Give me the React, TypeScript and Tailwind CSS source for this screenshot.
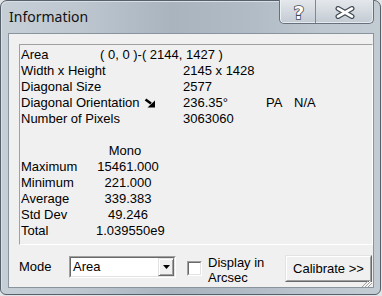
import React from "react";

function Arrow() {
  return (
    <svg width="12" height="10" viewBox="0 0 12 10" className="ml-[4px]">
      <line x1="1.5" y1="1.5" x2="7" y2="5.5" stroke="#000" strokeWidth="2.6" />
      <polygon points="11,9.5 3.5,9.5 11,2.5" fill="#000" />
    </svg>
  );
}

function Row({ label, w, children }: { label: React.ReactNode; w: string; children?: React.ReactNode }) {
  return (
    <div className="flex h-[16px] items-center whitespace-nowrap">
      <div className={`${w} flex items-center shrink-0`}>{label}</div>
      {children}
    </div>
  );
}

function StatRow({ label, value }: { label: string; value: string }) {
  return (
    <div className="flex h-[16px] items-center whitespace-nowrap">
      <div className="w-[75px] shrink-0">{label}</div>
      <div className="w-[64px] text-center">{value}</div>
    </div>
  );
}

export default function App() {
  return (
    <div className="w-[382px] h-[296px] bg-[#e2e5e8] overflow-hidden font-['Liberation_Sans',Arial,sans-serif] text-black">
      <div className="w-[381px] h-[295px] rounded-t-[7px] rounded-b-[6px] border border-[#56616c] bg-[linear-gradient(90deg,#c6ced6_0%,#bec7d0_20%,#a9b4bf_45%,#b1bbc5_65%,#bec7d0_85%,#c3cbd3_100%)] flex flex-col pl-[7px] pr-[6px] pb-[6px] shadow-[inset_1px_1px_0_#d8dee4]">
        {/* title bar */}
        <div className="h-[32px] flex items-start shrink-0">
          <div className="mt-[6px] ml-[1px] h-[20px] leading-[20px] text-[14px] font-['Noto_Sans',sans-serif] text-[#111]">
            Information
          </div>
          <div className="ml-auto -mt-[1px] flex h-[24px] w-[95px] rounded-b-[5px] border border-t-0 border-[#66717d] overflow-hidden bg-[linear-gradient(180deg,#e4e8ec_0%,#d3d9df_50%,#c3cad2_100%)] shadow-[inset_1px_0_0_#eef1f4,inset_-1px_-1px_0_#e6eaee]">
            <div className="w-[35px] h-full flex items-center justify-center">
              <svg width="18" height="22" viewBox="0 0 18 22" className="ml-[2px] overflow-visible">
                <text
                  x="9"
                  y="18"
                  textAnchor="middle"
                  fontFamily="DejaVu Sans, sans-serif"
                  fontWeight="bold"
                  fontSize="18"
                  fill="#ffffff"
                  stroke="#3f4852"
                  strokeWidth="1.6"
                  paintOrder="stroke"
                >
                  ?
                </text>
              </svg>
            </div>
            <div className="flex-1 h-full border-l border-[#7d8894] flex items-center justify-center">
              <svg width="20" height="13" viewBox="0 0 20 13" className="ml-[1px] mt-[1px]">
                <g strokeLinecap="round">
                  <line x1="3" y1="2.5" x2="17" y2="10.5" stroke="#3f4852" strokeWidth="5" />
                  <line x1="17" y1="2.5" x2="3" y2="10.5" stroke="#3f4852" strokeWidth="5" />
                  <line x1="3" y1="2.5" x2="17" y2="10.5" stroke="#ffffff" strokeWidth="2.6" />
                  <line x1="17" y1="2.5" x2="3" y2="10.5" stroke="#ffffff" strokeWidth="2.6" />
                </g>
              </svg>
            </div>
          </div>
        </div>

        {/* client area */}
        <div className="relative h-[255px] w-[366px] border border-[#8a949e] bg-[#f0f0f0] flex flex-col text-[13px] leading-[16px]">
          <div className="ml-[10px] mt-[10px] w-[354px] h-[201px] border border-l-[#a0a0a0] border-t-[#a0a0a0] border-r-white border-b-white pl-[1px] pt-[2px]">
            <Row label="Area" w="w-[79px]">
              <span>( 0, 0 )-( 2144, 1427 )</span>
            </Row>
            <Row label="Width x Height" w="w-[162px]">
              <span>2145 x 1428</span>
            </Row>
            <Row label="Diagonal Size" w="w-[162px]">
              <span>2577</span>
            </Row>
            <Row
              label={
                <>
                  <span>Diagonal Orientation</span>
                  <Arrow />
                </>
              }
              w="w-[162px]"
            >
              <span className="w-[83px] shrink-0">236.35°</span>
              <span className="w-[28px] shrink-0">PA</span>
              <span>N/A</span>
            </Row>
            <Row label="Number of Pixels" w="w-[162px]">
              <span>3063060</span>
            </Row>
            <div className="h-[16px]" />
            <div className="flex h-[16px] items-center">
              <div className="w-[75px]" />
              <div className="w-[64px] text-center pr-[6px]">Mono</div>
            </div>
            <StatRow label="Maximum" value="15461.000" />
            <StatRow label="Minimum" value="221.000" />
            <StatRow label="Average" value="339.383" />
            <StatRow label="Std Dev" value="49.246" />
            <StatRow label="Total" value="1.039550e9" />
          </div>

          {/* bottom controls */}
          <div className="flex items-start pl-[10px]">
            <div className="mt-[14px] w-[50px] h-[16px]">Mode</div>
            <div className="mt-[11px] w-[107px] h-[22px] border border-l-[#a0a0a0] border-t-[#a0a0a0] border-r-white border-b-white">
              <div className="h-full w-full border border-l-[#696969] border-t-[#696969] border-r-[#e3e3e3] border-b-[#e3e3e3] bg-white flex items-center">
                <span className="ml-[2px] flex-1">Area</span>
                <div className="w-[16px] h-[18px] bg-[#f0f0f0] border border-l-[#e3e3e3] border-t-[#e3e3e3] border-r-[#696969] border-b-[#696969] shadow-[inset_1px_1px_0_#fff,inset_-1px_-1px_0_#a0a0a0] flex items-center justify-center">
                  <svg width="7" height="4" viewBox="0 0 7 4">
                    <polygon points="0,0 7,0 3.5,4" fill="#000" />
                  </svg>
                </div>
              </div>
            </div>
            <div className="mt-[16px] ml-[11px] w-[15px] h-[15px] border border-l-[#a0a0a0] border-t-[#a0a0a0] border-r-white border-b-white">
              <div className="h-full w-full border border-l-[#696969] border-t-[#696969] border-r-[#e3e3e3] border-b-[#e3e3e3] bg-white" />
            </div>
            <div className="mt-[10px] ml-[6px] w-[77px] leading-[15px]">
              Display in
              <br />
              Arcsec
            </div>
            <div className="mt-[10px] w-[87px] h-[27px] border border-l-[#e3e3e3] border-t-[#e3e3e3] border-r-[#696969] border-b-[#696969] bg-[#f0f0f0]">
              <div className="h-full w-full border border-l-white border-t-white border-r-[#a0a0a0] border-b-[#a0a0a0] flex items-center justify-center">
                Calibrate &gt;&gt;
              </div>
            </div>
          </div>

          {/* size grip */}
          <svg width="12" height="6" viewBox="0 0 12 6" className="absolute right-[1px] bottom-0">
            <g stroke="#ffffff" strokeWidth="1">
              <line x1="4" y1="6" x2="10" y2="0" />
              <line x1="7" y1="6" x2="13" y2="0" />
            </g>
            <g stroke="#a0a0a0" strokeWidth="1">
              <line x1="5" y1="6" x2="11" y2="0" />
              <line x1="8" y1="6" x2="14" y2="0" />
              <line x1="2" y1="6" x2="8" y2="0" />
            </g>
          </svg>
        </div>
      </div>
    </div>
  );
}
